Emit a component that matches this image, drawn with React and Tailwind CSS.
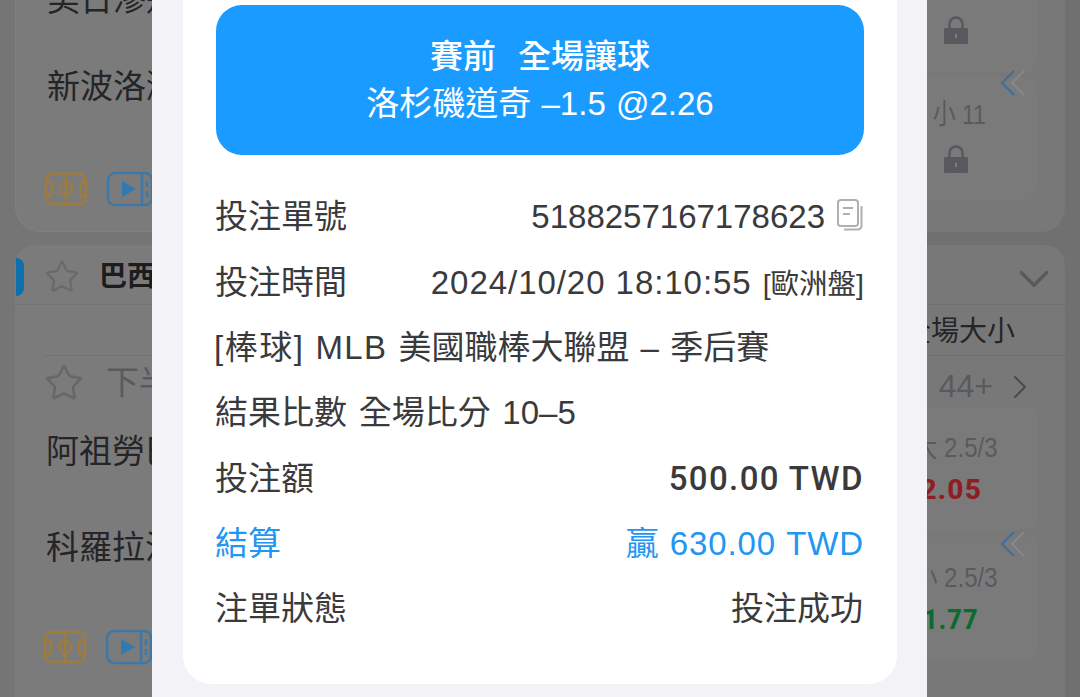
import React from 'react';
import { Star, ChevronDown, ChevronRight } from 'lucide-react';

const font = { cjk: "font-['Liberation_Sans','Noto_Sans_CJK_TC',sans-serif]" };

// small field icon shown under each match
const PitchIcon = () => (
    <svg width="44" height="34" viewBox="0 0 44 34" fill="none" stroke="#a07c3c" strokeWidth="2.4" className="shrink-0">
        <rect x="2" y="2" width="40" height="30" rx="7" />
        <path d="M22 2v30" />
        <circle cx="22" cy="17" r="6" />
        <path d="M2 10h3a3 3 0 0 1 3 3v8a3 3 0 0 1-3 3H2" />
        <path d="M42 10h-3a3 3 0 0 0-3 3v8a3 3 0 0 0 3 3h3" />
    </svg>
);

const VideoIcon = () => (
    <svg width="48" height="36" viewBox="0 0 48 36" fill="none" className="shrink-0">
        <rect x="2" y="2" width="44" height="32" rx="7" stroke="#3f78a6" strokeWidth="2.6" />
        <path d="M16 10l14 8-14 8z" fill="#3279b0" />
        <path d="M36 2v32" stroke="#3f78a6" strokeWidth="2.6" />
        <path d="M41 10v6M41 20v6" stroke="#3f78a6" strokeWidth="2.6" />
    </svg>
);

const LockIcon = () => (
    <svg width="24" height="28" viewBox="0 0 24 28">
        <path d="M5.5 13V8a6.5 6.5 0 0 1 13 0v5" fill="none" stroke="#58585e" strokeWidth="2.4" />
        <rect x="0" y="12" width="24" height="16" rx="1.5" fill="#58585e" />
        <rect x="11" y="18" width="2" height="4" fill="#7b7b80" />
    </svg>
);

const DoubleChevron = () => (
    <svg width="26" height="28" viewBox="0 0 26 28" fill="none" strokeWidth="2">
        <path d="M25 2L13 14l12 12" stroke="#85888c" />
        <path d="M15 2L3 14l12 12" stroke="#3a6f9e" />
    </svg>
);

const OddsCell = ({ label, odds, oddsClass, chevron }) => (
    <div className="relative flex h-[123px] w-[330px] flex-col items-end rounded-b-[14px] rounded-t-[10px] bg-[#7a7a7b] pr-[40px]">
        {chevron && (
            <div className="absolute right-[13px] top-[-7px]">
                <DoubleChevron />
            </div>
        )}
        <span className="mt-[24px] origin-right scale-x-[0.89] text-[27px] leading-[34px]">{label}</span>
        <span className={`mt-[9px] text-[28px] font-extrabold leading-[32px] tracking-[1.2px] font-['Roboto',sans-serif] ${oddsClass}`}>{odds}</span>
    </div>
);

const LeftColumn = () => (
    <div className={`flex h-full w-[152px] shrink-0 flex-col overflow-hidden bg-[#757575] pl-[15px] text-[33px] leading-[40px] text-[#252527] ${font.cjk}`}>
        <div className="flex h-[232px] w-[400px] shrink-0 flex-col rounded-b-[26px] border-b border-l border-[#808080] bg-[#7b7b7b] pl-[31px]">
            <span className="mt-[-20px] whitespace-nowrap">美日滲透</span>
            <span className="mt-[47px] whitespace-nowrap">新波洛濟</span>
            <div className="ml-[-3px] mt-[64px] flex items-center gap-[18px]">
                <PitchIcon />
                <VideoIcon />
            </div>
        </div>
        <div className="mt-[13px] flex w-[400px] shrink-0 grow flex-col rounded-t-[20px] bg-[#7b7b7b]">
            <div className="flex h-[60px] shrink-0 items-center border-b border-[#737373] pt-[4px]">
                <div className="ml-[1px] h-[38px] w-[8px] rounded-r-[10px] bg-[#0f6fad]" />
                <Star className="ml-[20px]" size={36} strokeWidth={1.6} color="#6a6a6c" />
                <span className="ml-[19px] text-[28px] font-bold text-[#1c1c1e]">巴西甲級</span>
            </div>
            <div className="mx-[29px] mt-[50px] flex h-[55px] shrink-0 items-center border-t border-[#737373]">
                <Star size={40} strokeWidth={1.6} color="#66686c" />
                <span className="ml-[22px] text-[#595a5e]">下半場</span>
            </div>
            <span className="ml-[31px] mt-[22px] whitespace-nowrap">阿祖勞巴</span>
            <span className="ml-[31px] mt-[56px] whitespace-nowrap">科羅拉治</span>
            <div className="ml-[28px] mt-[61px] flex items-center gap-[18px]">
                <PitchIcon />
                <VideoIcon />
            </div>
        </div>
    </div>
);

const RightColumn = () => (
    <div className={`flex h-full grow flex-col items-end overflow-hidden bg-[#707070] pr-[15px] text-[#595a5e] ${font.cjk}`}>
        <div className="flex h-[232px] w-[330px] shrink-0 flex-col items-end rounded-b-[24px] bg-[#787878] pr-[27px]">
            <div className="flex h-[72px] w-[330px] shrink-0 flex-col items-end justify-end rounded-b-[14px] bg-[#7a7a7b] pr-[70px] pb-[28px]">
                <LockIcon />
            </div>
            <div className="relative mt-[6px] flex h-[122px] w-[330px] shrink-0 flex-col items-end rounded-[14px] bg-[#7a7a7b] pr-[52px]">
                <div className="absolute right-[13px] top-[-9px]">
                    <DoubleChevron />
                </div>
                <span className="mt-[17px] origin-right scale-x-[0.82] text-[28px] leading-[40px]">小 11</span>
                <div className="mr-[18px] mt-[10px]">
                    <LockIcon />
                </div>
            </div>
        </div>
        <div className="mt-[13px] flex w-[330px] shrink-0 grow flex-col items-end rounded-t-[20px] bg-[#787878]">
            <div className="flex h-[60px] w-full shrink-0 items-center justify-end border-b border-[#707070] pr-[6px] pt-[8px]">
                <ChevronDown size={50} strokeWidth={1.7} color="#5a5a5c" />
            </div>
            <div className="flex h-[51px] w-[302px] shrink-0 items-center justify-end border-b border-[#707070] pr-[22px] pt-[3px] text-[28px] text-[#252527]">
                <span className="mr-[28px]">全場大小</span>
            </div>
            <div className="flex h-[51px] w-full shrink-0 items-center justify-end pr-[25px] pt-[8px] text-[32px] leading-[40px]">
                <span>44+</span>
                <ChevronRight className="ml-[7px] mt-[3px]" size={40} strokeWidth={1.2} color="#4c4c50" />
            </div>
            <div className="mr-[27px] flex flex-col gap-[7px]">
                <OddsCell label="大 2.5/3" odds="2.05" oddsClass="mr-[16px] text-[#8f1d22]" />
                <OddsCell chevron label="小 2.5/3" odds="1.77" oddsClass="mr-[19px] origin-right scale-x-[0.9] text-[#0c6b2c]" />
            </div>
        </div>
    </div>
);

const Row = ({ label, value, labelClass = 'ml-[-1px]', valueClass = '', children }) => (
    <div className="flex h-[65.33px] items-center justify-between whitespace-nowrap">
        <span className={labelClass}>{label}</span>
        {value && <span className={valueClass}>{value}</span>}
        {children}
    </div>
);

const CopyIcon = () => (
    <svg width="26" height="32" viewBox="0 0 26 32" fill="none" stroke="#b0b0b4" strokeWidth="2" className="ml-[12px] mr-[1px] mt-[-4px]">
        <rect x="1" y="1" width="20" height="26" rx="3" />
        <path d="M6 9h10M6 15h7" />
        <path d="M24.5 7v20a3.5 3.5 0 0 1-3.5 3.5H7" />
    </svg>
);

const App = () => {
    return (
        <div className="flex h-[697px] w-[1080px] overflow-hidden">
            <LeftColumn />
            <div className="flex h-full w-[775px] shrink-0 flex-col justify-end bg-[#f2f2f7] pb-[13px] pl-[31px] pr-[30px]">
                <div className={`h-[684px] rounded-b-[28px] bg-white px-[33px] pt-[5px] text-[33px] text-[#3a3a3c] ${font.cjk}`}>
                    <div className="flex h-[150px] flex-col items-center justify-center rounded-[26px] bg-[#1a9bff] text-white">
                        <span className="mt-[1px] text-[33px] font-medium leading-[48px] [word-spacing:13px]">賽前 全場讓球</span>
                        <span className="mt-[-1px] text-[33px] leading-[48px] [word-spacing:1px]">洛杉磯道奇 –1.5 @2.26</span>
                    </div>
                    <div className="mt-[29.5px]">
                        <Row label="投注單號">
                            <span className="ml-auto">5188257167178623</span>
                            <CopyIcon />
                        </Row>
                        <Row label="投注時間">
                            <span className="flex items-baseline">
                                <span className="tracking-[0.95px]">2024/10/20 18:10:55</span>
                                <span className="ml-[11px] text-[28.5px]">[歐洲盤]</span>
                            </span>
                        </Row>
                        <Row
                            label={
                                <>
                                    <span className="tracking-[1.5px]">[棒球]</span> <span className="tracking-[1.3px]">MLB</span> 美國職棒大聯盟 – 季后賽
                                </>
                            }
                            labelClass="ml-[-2px] [word-spacing:2px]"
                        />
                        <Row label="結果比數 全場比分 10–5" labelClass="ml-[-1px] [word-spacing:2.5px]" />
                        <Row label="投注額" value="500.00 TWD" valueClass="font-['Roboto','Noto_Sans_CJK_TC',sans-serif] font-medium tracking-[1.4px]" />
                        <Row label="結算" labelClass="ml-[-1px] text-[#2196f3]" value="贏 630.00 TWD" valueClass="text-[#2196f3] tracking-[0.9px]" />
                        <Row label="注單狀態" value="投注成功" valueClass="mr-[1px]" />
                    </div>
                </div>
            </div>
            <RightColumn />
        </div>
    );
};

export default App;
